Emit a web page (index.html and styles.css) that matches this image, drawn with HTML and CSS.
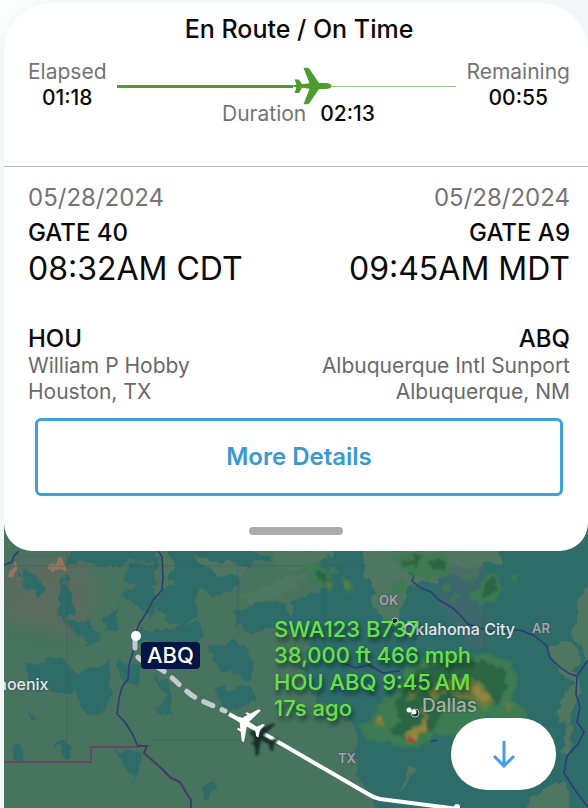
FILE: index.html
```html
<!DOCTYPE html>
<html lang="en">
<head>
<meta charset="utf-8">
<meta name="viewport" content="width=device-width, initial-scale=1">
<title>Flight status</title>
<link rel="stylesheet" href="styles.css">
</head>
<body>
<main class="screen">
  <article class="card">
    <header class="status">
      <h1 class="title">En Route / On Time</h1>
      <div class="progress">
        <div class="stat"><span class="label">Elapsed</span><strong class="value">01:18</strong></div>
        <div class="middle">
          <div class="track">
            <span class="done"></span>
            <svg class="plane" viewBox="0 0 39 38" aria-hidden="true"><path d="M38.500 19C38.500 17 36 16 32 16H26L16.500 2Q15.500.8 14 .8H10.500L16.500 16.200L9 17.200L6 12.500H1.500L3.500 17.500L0 18.500V19.500L3.500 20.500L1.500 26H6L9 20.800L16.500 21.800L10.500 37.200H14Q15.500 37.200 16.500 36L26 22H32C36 22 38.500 21 38.500 19Z"/></svg>
            <span class="rest"></span>
          </div>
          <div class="duration"><span class="label">Duration</span><strong class="value">02:13</strong></div>
        </div>
        <div class="stat"><span class="label">Remaining</span><strong class="value">00:55</strong></div>
      </div>
    </header>
    <div class="legs">
      <section class="leg">
        <p class="date">05/28/2024</p>
        <p class="gate">GATE 40</p>
        <p class="time">08:32AM CDT</p>
        <h2 class="code">HOU</h2>
        <p class="place">William P Hobby</p>
        <p class="place">Houston, TX</p>
      </section>
      <section class="leg arrival">
        <p class="date">05/28/2024</p>
        <p class="gate">GATE A9</p>
        <p class="time">09:45AM MDT</p>
        <h2 class="code">ABQ</h2>
        <p class="place">Albuquerque Intl Sunport</p>
        <p class="place">Albuquerque, NM</p>
      </section>
    </div>
    <button class="details" type="button">More Details</button>
    <div class="handle"></div>
  </article>

  <section class="map" aria-label="Flight map">
    <svg class="canvas" viewBox="4 510 584 298" preserveAspectRatio="xMinYMin slice">
      <defs>
        <filter id="coast" x="-5%" y="-5%" width="110%" height="110%" color-interpolation-filters="sRGB">
          <feTurbulence type="fractalNoise" baseFrequency=".07" numOctaves="3" seed="4"/>
          <feDisplacementMap in="SourceGraphic" scale="16" xChannelSelector="R" yChannelSelector="G"/>
        </filter>
        <filter id="storm" x="-5%" y="-5%" width="110%" height="110%" color-interpolation-filters="sRGB">
          <feTurbulence type="fractalNoise" baseFrequency=".11" numOctaves="2" seed="9"/>
          <feDisplacementMap in="SourceGraphic" scale="11" xChannelSelector="R" yChannelSelector="G"/>
          <feGaussianBlur stdDeviation="1"/>
        </filter>
        <filter id="haze"><feGaussianBlur stdDeviation="9"/></filter>
        <filter id="soft"><feGaussianBlur stdDeviation="1"/></filter>
        <path id="jet" d="M0-14C1.800-13 2.500-11 2.500-8L8-4.500V-7H10V-3L18 2.500V5L2.500 0L1.800 9L7 13V15.500L0 13.500L-7 15.500V13L-1.800 9L-2.500 0L-18 5V2.500L-10-3V-7H-8V-4.500L-2.500-8C-2.500-11-1.800-13 0-14Z"/>
      </defs>
      <rect x="4" y="510" width="584" height="298" fill="#47735f"/>
      <path d="M4 560H92V620L66 640L40 625H4Z" fill="#65675f" opacity=".65" filter="url(#haze)"/>
      <g filter="url(#coast)">
        <g fill="#2d6c69">
          <path d="M328 500H610V830H388L366 788L352 758L360 738L346 715L322 704L300 668L312 640L286 628L300 594L330 590L318 570Z"/>
          <path d="M66 545H158L155 563L132 560L117 568L84 560L70 562Z"/>
          <path d="M132 565L156 562L155 592L161 602L149 616L136 606L121 596L136 586L120 578Z"/>
          <path d="M166 545H244L270 556L248 570L228 567L240 584L220 596L198 588L197 612L182 626L165 620L158 604L171 584Z"/>
          <path d="M62 574L72 590L74 610L66 626L57 616Z"/>
          <path d="M70 620L94 623L101 640L90 648L83 635L71 632Z"/>
          <path d="M27 663L63 659L76 672L107 664L110 696L106 713L88 715L72 690L46 690L25 684Z"/>
          <path d="M156 676L169 680L174 712L162 719L157 708L164 698Z"/>
          <path d="M140 628L168 630L196 620L206 634L186 648L150 644L132 638Z"/>
          <path d="M206 650L236 640L256 664L246 680L225 670Z"/>
          <path d="M218 692L248 684L258 698L236 712L222 706Z"/>
          <path d="M236 610L282 600L292 620L258 634L238 626Z"/>
          <path d="M22 568L34 574L44 588L36 597L22 586Z"/>
          <path d="M105 615L117 610L118 632L107 632Z"/>
          <path d="M54 742L66 742L72 760L64 760Z"/>
          <path d="M14 745L24 751L22 762L13 760Z"/>
          <path d="M28 712L37 723H29Z"/>
          <path d="M118 751L141 755L136 783L126 770Z"/>
          <path d="M202 786L216 778L212 794L204 799Z"/>
          <path d="M118 660L140 664L138 690L124 680Z"/>
        </g>
        <g fill="#4e7660">
          <path d="M366 545H500V563L480 564L476 584L456 576L424 580L404 590L398 628L386 622L370 602L378 590L364 578Z"/>
          <path d="M190 556L216 562L246 567L240 578L216 574Z"/>
          <path d="M240 594L270 585L292 574L310 580L280 596L252 606Z"/>
          <path d="M270 550H336L322 562L300 568L284 568Z"/>
          <path d="M576 604L600 570V664L586 660L574 634Z"/>
          <path d="M552 645L572 640L579 664L572 672L580 690L566 730L556 712L572 686L558 667Z"/>
          <path d="M408 764L418 768L400 790Z"/>
          <path d="M534 798L562 778L570 815H520Z"/>
          <path d="M562 728L574 722L570 750L562 752Z"/>
          <path d="M160 552L174 560L171 576L162 572Z"/>
        </g>
        <g fill="#8f7562"><path d="M52 564L58 559L69 563L67 569L53 570Z"/><path d="M8 570L20 564L14 577H6Z"/></g>
        <path d="M440 566H484V648H462V630L440 606Z" fill="#48666e" opacity=".55"/>
      </g>
      <g fill="none" stroke="#3d4f67" stroke-opacity=".35">
        <path d="M4 566H366M67 552V760M238 566V636M325 575V650M484 610V660M150 740H290"/>
      </g>
      <path d="M4 762H91V747H138L141 744" fill="none" stroke="#68466d" stroke-width="2"/>
      <path d="M138 746H147L144 753L152 760L161 768L171 778L180 782L187 794L191 800V810" fill="none" stroke="#453969" stroke-width="2"/>
      <g fill="none" stroke="#2e3a78" stroke-width="1.500" stroke-linejoin="round">
        <path d="M158 550L162 557L163 577L162 590L153 600L147 612L139 624L135 635L133 652L129 665L128 679L122 687L119 699L117 714L125 722L133 735L138 747"/>
        <path d="M4 565L12 562L14 556L19 551"/>
        <path d="M409 572L414 575L412 581L421 588L431 592L439 600L454 609L461 616L468 624L480 628L496 632L520 630L535 636L547 646L550 658L561 668L570 674L577 676L588 660"/>
        <path d="M577 676L576 694L580 707L577 722L584 732L578 744L567 756L564 773L575 790L584 802L588 807"/>
        <path d="M340 662L356 668L369 665L383 673L400 671M429 742L437 740"/>
      </g>
      <g filter="url(#storm)">
        <g fill="#3d7b52">
          <path d="M303 563L313 566L330 572L336 586L329 590L313 582Z"/><path d="M328 567L336 566L338 573L331 574Z"/><path d="M340 581L348 579L356 589L342 590Z"/>
          <path d="M392 553L419 553L425 558L442 551L452 562L448 572L429 580L415 576L397 564Z"/>
          <path d="M390 586L402 580L405 590L396 595Z"/><path d="M440 586L450 584L453 590L442 592Z"/><path d="M462 574L473 573L475 581L466 582Z"/><path d="M451 596H462V600L452 601Z"/>
          <path d="M484 577L497 571L500 584L504 590L492 601L480 605L468 598L478 588Z"/><path d="M511 577L518 575L516 581Z"/>
          <path d="M418 661L454 654L490 654L514 663L518 680L511 700L527 711L521 720L490 717L472 728L450 738L436 732L430 742L418 748L405 748L388 743L366 739L359 724L371 718L382 704L401 684L405 670Z"/>
        </g>
        <g fill="#2a6544">
          <path d="M405 558L420 555L416 567L404 565Z"/><path d="M428 561L449 560L445 571L432 570Z"/><path d="M484 583L496 576L497 591L485 597Z"/><path d="M314 570L326 575L332 584L322 583Z"/>
          <path d="M416 670L448 661L482 661L506 672L506 688L500 704L470 708L448 700L432 730L410 741L391 731L400 716L395 701Z"/>
        </g>
        <g fill="#667b3f">
          <path d="M425 690L448 680L470 676L484 685L496 702L486 710L466 700L446 694L433 704Z"/><path d="M372 722L382 714L386 724L376 730Z"/>
          <path d="M403 735L418 724L424 708L430 716L426 733L408 743Z"/><path d="M507 704L516 703L512 711L506 710Z"/>
          <path d="M324 581L332 583L328 588Z"/><path d="M342 581L349 581L348 588L342 587Z"/><path d="M406 560L412 557L413 562Z"/>
        </g>
        <g fill="#93853c"><path d="M466 680L478 687L490 698L486 705L476 696L465 690Z"/><path d="M405 735L420 727L423 718L426 729L412 741Z"/><path d="M376 720L381 717L382 723Z"/><path d="M408 690L422 686L416 698L408 702Z" opacity=".5"/></g>
        <g fill="#a34439"><path d="M408 736H412V740H408Z"/><path d="M425 719L428 722L425 728Z"/></g>
      </g>

      <path d="M135 638V651Q136 660 151 664C174 674 181 691 200 700L225 711" class="ahead"/>
      <path d="M229 714L273 739L368 794Q374 798 380 799L458 809" class="flown"/>
      <use href="#jet" class="jet-shadow" transform="translate(262 738) rotate(-62)"/>
      <use href="#jet" fill="#fff" transform="translate(248 724) rotate(-62)"/>
      <circle cx="136" cy="636" r="5" fill="#fff"/>
      <rect x="141" y="642" width="59" height="27" rx="4" fill="#051442"/>
      <text x="147" y="663" class="airport">ABQ</text>
      <text x="-13" y="690" class="city">Phoenix</text>
      <circle cx="395" cy="621" r="3" class="dot"/>
      <text x="403" y="635" class="city">Oklahoma City</text>
      <text x="379" y="605" class="state">OK</text>
      <text x="532" y="633" class="state">AR</text>
      <text x="338" y="763" class="state">TX</text>
      <circle cx="415" cy="713" r="4" class="dot"/>
      <circle cx="409" cy="710" r="2.500" fill="#fff"/><circle cx="414" cy="712" r="2.500" fill="#fff"/>
      <circle cx="457" cy="807" r="3" fill="#fff"/>
      <text x="422" y="712" class="city dim">Dallas</text>
      <g class="flight">
        <text x="274" y="637">SWA123 B737</text>
        <text x="274" y="663">38,000 ft 466 mph</text>
        <text x="274" y="690">HOU ABQ 9:45&#8201;AM</text>
        <text x="274" y="716">17s ago</text>
      </g>
    </svg>
    <button class="collapse" type="button" aria-label="Scroll down">
      <svg viewBox="0 0 24 28" aria-hidden="true"><path d="M12 1V26M2 16L12 26L22 16"/></svg>
    </button>
  </section>
</main>
</body>
</html>
```
FILE: styles.css
```css
* { box-sizing: border-box; }

body {
  margin: 0;
  background: #f3f6f6;
  font-family: Inter, "Liberation Sans", sans-serif;
  color: #0a0a0a;
}

h1, h2, p { margin: 0; font-weight: 400; }

.screen {
  display: flex;
  flex-direction: column;
  min-height: 100vh;
  padding: 3px 0 0 4px;
  background: linear-gradient(135deg, #fff, #f4f7f7 40px);
}

.card {
  position: relative;
  z-index: 1;
  display: flex;
  flex-direction: column;
  background: #fff;
  border-radius: 48px 48px 28px 28px;
  padding-bottom: 16px;
}

.status {
  height: 164px;
  padding: 10px 18px 0 24px;
  border-bottom: 1px solid #b8b8b9;
}

.title {
  font-size: 25px;
  line-height: 32px;
  font-weight: 500;
  text-align: center;
}

.progress {
  display: grid;
  grid-template-columns: auto 1fr auto;
  column-gap: 10px;
  margin-top: 14px;
}

.stat { display: flex; flex-direction: column; align-items: center; }
.label, .value { font-size: 21px; line-height: 26px; }
.label { color: #747476; }
.value { font-weight: 500; }

.middle { margin-top: 8px; }
.track { display: flex; align-items: center; }
.done { width: 52%; height: 3px; background: #4e9b2e; }
.plane { width: 39px; height: 38px; fill: #4e9b2e; }
.rest { flex: 1; height: 1px; background: #99ca88; }

.duration {
  display: flex;
  justify-content: center;
  gap: 14px;
  margin-top: -4px;
  padding-left: 24px;
}

.legs {
  display: flex;
  justify-content: space-between;
  padding: 14px 18px 0 24px;
}

.arrival { text-align: right; }
.date { font-size: 24px; line-height: 34px; color: #747476; }
.gate { font-size: 24px; line-height: 36px; font-weight: 500; }
.time { font-size: 32px; line-height: 36px; }
.code { margin-top: 38px; font-size: 24px; line-height: 28px; font-weight: 500; }
.place { font-size: 21px; line-height: 26px; color: #69696b; }

.details {
  height: 78px;
  margin: 13px 25px 0 31px;
  border: 3px solid #439fd8;
  border-radius: 6px;
  background: #fff;
  color: #3b99cf;
  font: 600 24px/30px Inter, "Liberation Sans", sans-serif;
}

.handle {
  width: 94px;
  height: 8px;
  margin: 31px auto 0;
  border-radius: 4px;
  background: #acacae;
}

.map {
  position: relative;
  display: flex;
  flex: 1;
  min-height: 240px;
  margin-top: -41px;
  overflow: hidden;
}

.canvas { position: absolute; width: 100%; height: 100%; }

.ahead {
  fill: none;
  stroke: #c3cbd1;
  stroke-width: 5;
  stroke-linecap: round;
  stroke-dasharray: 10 10;
}

.flown { fill: none; stroke: #fff; stroke-width: 4; }
.jet-shadow { fill: #142b25; filter: url(#soft); }
.airport { font-size: 22px; font-weight: 500; fill: #fff; }
.city { font-size: 16px; font-weight: 500; fill: #e4e9ed; text-shadow: 0 0 2px #30434c; }
.dim { font-size: 19px; fill: #a5b29b; }
.state { font-size: 13px; font-weight: 600; fill: #a3a3aa; text-shadow: 0 0 2px #3b4650; }
.dot { fill: #182a25; stroke: #c3cabe; stroke-width: 1; }
.flight { font-size: 22px; font-weight: 500; fill: #66e342; text-shadow: 2px 4px 4px rgba(5, 30, 30, 0.7); }

.collapse {
  position: absolute;
  right: 32px;
  bottom: 18px;
  display: grid;
  place-items: center;
  width: 105px;
  height: 72px;
  border: 0;
  border-radius: 36px;
  background: #fff;
}

.collapse svg {
  width: 24px;
  height: 28px;
  fill: none;
  stroke: #459ae9;
  stroke-width: 3;
}
```
